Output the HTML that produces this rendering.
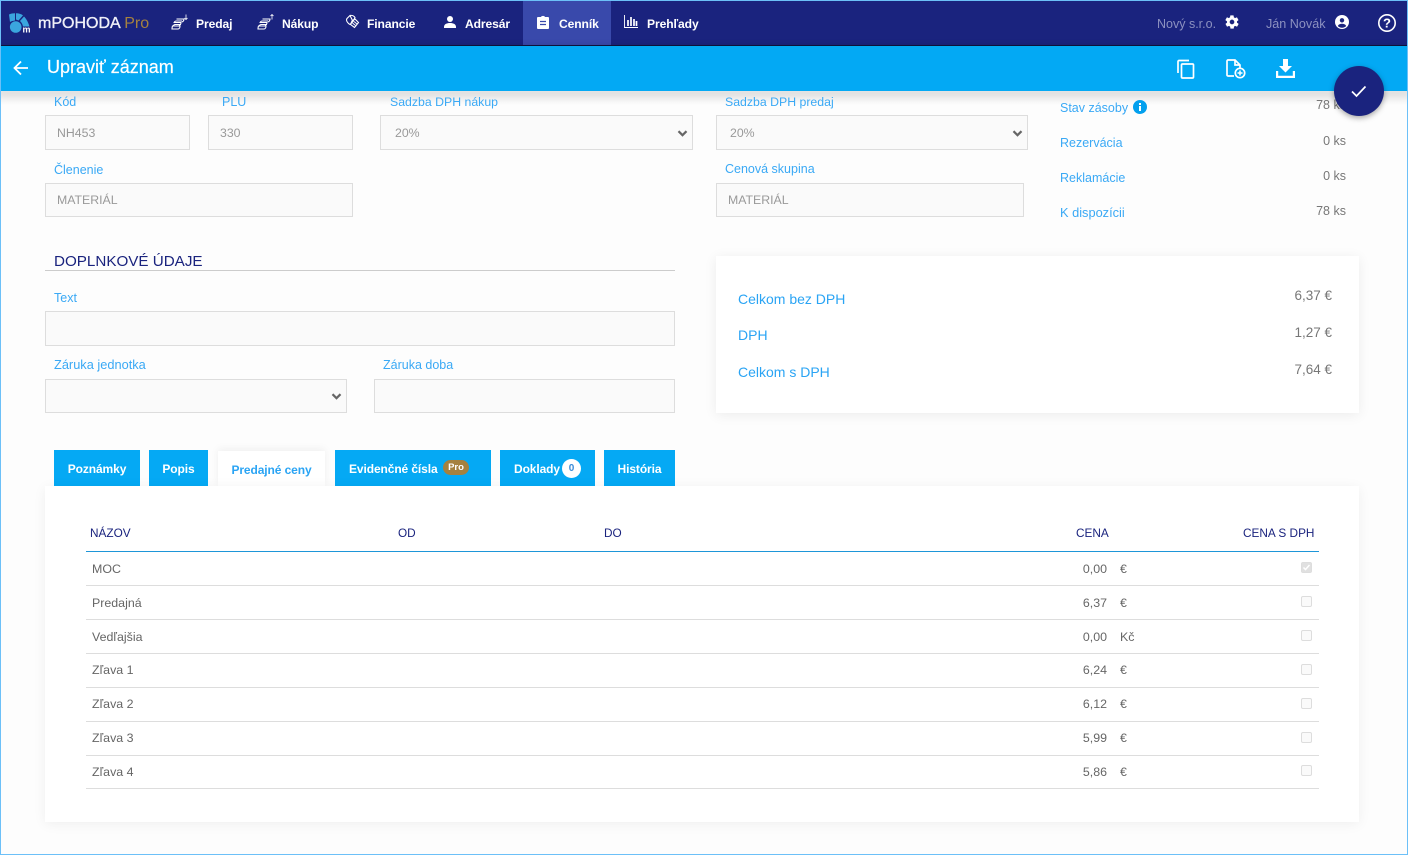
<!DOCTYPE html>
<html lang="sk"><head><meta charset="utf-8"><title>mPOHODA</title>
<style>
*{box-sizing:border-box}
html,body{margin:0;padding:0}
body{width:1408px;height:855px;position:relative;overflow:hidden;background:#fdfdfd;font-family:"Liberation Sans",sans-serif;font-size:13px;color:#666}
.a,.t,.l,.i,.r{position:absolute}
.t,.l,.r{line-height:16px;white-space:nowrap}
.l{color:#3aa9f5;font-size:12.5px}
.r{text-align:right;color:#777;font-size:12.5px}
.i{background:#fafafa;border:1px solid #ddd;color:#999;font-size:12.3px;line-height:34px;padding-left:11px}
.sel svg{position:absolute;right:4px;top:14px}
.n{color:#fff;font-weight:bold;font-size:12.1px;letter-spacing:-.1px}
.tab{position:absolute;top:450px;height:36px;background:#05a9f4;color:#fff;font-weight:bold;font-size:12px;line-height:38px;text-align:center;white-space:nowrap;letter-spacing:-.1px}
.h{color:#1a237e;font-size:11.8px;top:525px}
.line{position:absolute;left:86px;width:1233px;height:1px;background:#ddd}
.c{position:absolute;left:1301px;width:11px;height:11px;border:1px solid #ddd;border-radius:2px;background:#fafafa}
.s{color:#666;font-size:12.4px}
</style></head><body>
<div class="a" style="left:0;top:0;width:1408px;height:46px;background:#1a237e;border-bottom:1px solid #10143f"></div>
<div class="a" style="left:523px;top:1px;width:88px;height:44px;background:#3949ab"></div>
<div class="a" style="left:0;top:46px;width:1408px;height:45px;background:#03a9f4;box-shadow:0 2px 8px rgba(0,0,0,.3)"></div>

<svg class="a" style="left:8px;top:12px" width="24" height="22" viewBox="0 0 24 22"><path d="M1 2.500c2-1 4-1.300 6-1.300V8.500C5.500 8.800 3.500 9 2 10z" fill="#3aa6de"/><path d="M8 1.200c3 0 5.500.8 7 2.200L10.500 8.500 8 7.500z" fill="#3aa6de"/><path d="M16 4.500c2 2 4 5 5.500 10h-6.500c-.3-2-1-3.500-3-5.500z" fill="#3aa6de"/><circle cx="7.700" cy="15" r="5.800" fill="#3aa6de"/><rect x="14" y="14.500" width="8" height="6" fill="#1a237e"/><text x="14.500" y="20.300" font-size="9" font-weight="bold" fill="#fff" font-family="Liberation Sans">m</text></svg>
<div class="t" style="left:38px;top:16px;color:#f0f0f8;font-size:16px;-webkit-text-stroke:.35px #f0f0f8">mPOHODA <span style="color:#a5813f;-webkit-text-stroke:0">Pro</span></div>

<svg class="a" style="left:171px;top:14px" width="18" height="18" viewBox="0 0 18 18" fill="none" stroke="#fff" stroke-width="1.100"><path d="M5.500 5h7.500c0 1.500-.8 2.500-2 3M3 9c.3-1.300 1-2 2.500-2H11M2.500 8.500h7.500c0 1.500-.8 2.500-2 3M2 12.500c.3-1.300 1-2 2.500-2H10M1.500 12h7.500c0 1.500-.8 3-2 3H1c0-1.500.3-2.500 .5-3z"/><path d="M15 .5v5M13.500 4L15 5.500 16.500 4" stroke-width=".8"/></svg>
<div class="t n" style="left:196px;top:16px">Predaj</div>
<svg class="a" style="left:257px;top:14px" width="18" height="18" viewBox="0 0 18 18" fill="none" stroke="#fff" stroke-width="1.100"><path d="M5.500 5h7.500c0 1.500-.8 2.500-2 3M3 9c.3-1.300 1-2 2.500-2H11M2.500 8.500h7.500c0 1.500-.8 2.500-2 3M2 12.500c.3-1.300 1-2 2.500-2H10M1.500 12h7.500c0 1.500-.8 3-2 3H1c0-1.500.3-2.500 .5-3z"/><path d="M15 5.500v-5M13.500 2L15 .5 16.500 2" stroke-width=".8"/></svg>
<div class="t n" style="left:282px;top:16px">Nákup</div>
<svg class="a" style="left:345px;top:14px" width="15" height="16" viewBox="0 0 15 16" fill="none" stroke="#fff" stroke-width="1.100"><path d="M5 1.500l-3 3c-1.500 2 1 5 3 6l3-3z"/><path d="M5 1.500c2-.5 4 .5 5 2l-2 4"/><path d="M7 7l3-2 3.500 3.500-4 5-4-3z"/><path d="M7.500 9l3 2.500M9 7.500l3 2.500" stroke-width=".9"/></svg>
<div class="t n" style="left:367px;top:16px">Financie</div>
<svg class="a" style="left:443px;top:15px" width="14" height="14" viewBox="0 0 14 14" fill="#fff"><circle cx="7" cy="4" r="3"/><path d="M1 12c0-3 3-4 6-4s6 1 6 4v1H1z"/></svg>
<div class="t n" style="left:465px;top:16px">Adresár</div>
<svg class="a" style="left:536px;top:15px" width="14" height="15" viewBox="0 0 14 15"><path d="M2 2h3c.5-1.500 3.500-1.500 4 0h3a1 1 0 0 1 1 1v10a1 1 0 0 1-1 1H2a1 1 0 0 1-1-1V3a1 1 0 0 1 1-1z" fill="#fff"/><path d="M4 6.500h6M4 9.500h6" stroke="#3949ab" stroke-width="1.300"/></svg>
<div class="t n" style="left:559px;top:16px">Cenník</div>
<svg class="a" style="left:624px;top:14px" width="15" height="15" viewBox="0 0 15 15" fill="none" stroke="#fff"><path d="M.5 1v12.500H14" stroke-width=".9"/><path d="M4 12V6M7 12V3M10 12V5M12.500 12V7" stroke-width="1.700"/></svg>
<div class="t n" style="left:647px;top:16px">Prehľady</div>

<div class="t" style="left:1157px;top:16px;color:#8c91c0;font-size:12.5px">Nový s.r.o.</div>
<svg class="a" style="left:1224px;top:14px" width="16" height="16" viewBox="0 0 24 24" fill="#fff"><path d="M19.400 13c.1-.3.100-.7.100-1s0-.7-.1-1l2.100-1.600c.2-.2.200-.4.100-.6l-2-3.500c-.1-.2-.4-.3-.6-.2l-2.500 1c-.5-.4-1.100-.7-1.700-1l-.4-2.600c0-.3-.2-.5-.5-.5h-4c-.3 0-.5.200-.5.500l-.4 2.600c-.6.300-1.200.6-1.700 1l-2.500-1c-.2-.1-.5 0-.6.200l-2 3.500c-.1.200-.1.400.1.600L4.600 11c-.1.300-.1.700-.1 1s0 .7.100 1l-2.100 1.600c-.2.200-.2.400-.1.600l2 3.500c.1.200.4.300.6.200l2.500-1c.5.400 1.100.7 1.700 1l.4 2.600c0 .3.200.5.500.5h4c.3 0 .5-.2.500-.5l.4-2.600c.6-.3 1.200-.6 1.700-1l2.500 1c.2.100.5 0 .6-.2l2-3.500c.1-.2.100-.4-.1-.6zM12 15.500a3.500 3.500 0 1 1 0-7 3.500 3.500 0 0 1 0 7z"/></svg>
<div class="t" style="left:1266px;top:16px;color:#8c91c0;font-size:12.6px">Ján Novák</div>
<svg class="a" style="left:1335px;top:15px" width="14" height="14" viewBox="0 0 14 14"><circle cx="7" cy="7" r="7" fill="#fff"/><circle cx="7" cy="5.300" r="2.200" fill="#1a237e"/><path d="M2.800 11c.8-1.600 2.500-2.200 4.200-2.200s3.400.6 4.200 2.200c-1 1.100-2.500 1.800-4.200 1.800s-3.200-.7-4.200-1.800z" fill="#1a237e"/></svg>
<svg class="a" style="left:1377px;top:13px" width="20" height="20" viewBox="0 0 20 20" fill="none"><circle cx="10" cy="10" r="8.200" stroke="#fff" stroke-width="1.600"/><text x="10" y="14.500" text-anchor="middle" font-size="13" font-weight="bold" fill="#fff" font-family="Liberation Sans">?</text></svg>

<svg class="a" style="left:12px;top:59px" width="18" height="18" viewBox="0 0 18 18" fill="none" stroke="#fff" stroke-width="1.800"><path d="M16 9H2.500M9 2.500L2.500 9 9 15.500"/></svg>
<div class="t" style="left:47px;top:58px;color:#fff;font-size:18px;line-height:18px;-webkit-text-stroke:.2px #fff">Upraviť záznam</div>
<svg class="a" style="left:1176px;top:59px" width="20" height="20" viewBox="0 0 20 20" fill="none" stroke="#fff" stroke-width="1.700"><path d="M2 14V2.500a1 1 0 0 1 1-1h10"/><rect x="5.500" y="5" width="12" height="14" rx="1"/></svg>
<svg class="a" style="left:1225px;top:58px" width="21" height="21" viewBox="0 0 21 21" fill="none" stroke="#fff" stroke-width="1.700"><path d="M9 18H3a1 1 0 0 1-1-1V3a1 1 0 0 1 1-1h7l5 5v3"/><path d="M10 2v5h5"/><circle cx="15" cy="15" r="4.700"/><path d="M12.500 15h5M15 12.500v5" stroke-width="1.500"/></svg>
<svg class="a" style="left:1275px;top:58px" width="21" height="21" viewBox="0 0 21 21" fill="#fff"><path d="M8 1h5v7h4l-6.500 6.500L4 8h4z"/><path d="M1 13h2.200v4.800h14.600V13H20v7H1z"/></svg>

<div class="a" style="left:0;top:91px;width:1408px;height:14px;background:linear-gradient(#e4e4e4,rgba(255,255,255,0))"></div>

<div class="t l" style="left:54px;top:94px">Kód</div>
<div class="t l" style="left:222px;top:94px">PLU</div>
<div class="t l" style="left:390px;top:94px;font-size:12.3px">Sadzba DPH nákup</div>
<div class="t l" style="left:725px;top:94px;font-size:12.3px">Sadzba DPH predaj</div>
<div class="i" style="left:45px;top:115px;width:145px;height:35px">NH453</div>
<div class="i" style="left:208px;top:115px;width:145px;height:35px">330</div>
<div class="i sel" style="left:380px;top:115px;width:313px;height:35px;padding-left:14px">20%<svg width="11" height="7" viewBox="0 0 11 7" fill="none" stroke="#666" stroke-width="2.200"><path d="M1.500 1.200l4 4 4-4"/></svg></div>
<div class="i sel" style="left:716px;top:115px;width:312px;height:35px;padding-left:13px">20%<svg width="11" height="7" viewBox="0 0 11 7" fill="none" stroke="#666" stroke-width="2.200"><path d="M1.500 1.200l4 4 4-4"/></svg></div>
<div class="t l" style="left:54px;top:162px">Členenie</div>
<div class="t l" style="left:725px;top:161px">Cenová skupina</div>
<div class="i" style="left:45px;top:183px;width:308px;height:34px;line-height:32px">MATERIÁL</div>
<div class="i" style="left:716px;top:183px;width:308px;height:34px;line-height:32px">MATERIÁL</div>

<div class="t l" style="left:1060px;top:100px">Stav zásoby</div>
<svg class="a" style="left:1133px;top:100px" width="14" height="14" viewBox="0 0 14 14"><circle cx="7" cy="7" r="7" fill="#03a0ee"/><rect x="6" y="6" width="2" height="5" fill="#fff"/><rect x="6" y="3" width="2" height="2" fill="#fff"/></svg>
<div class="t l" style="left:1060px;top:135px">Rezervácia</div>
<div class="t l" style="left:1060px;top:170px">Reklamácie</div>
<div class="t l" style="left:1060px;top:205px;font-size:12.8px">K dispozícii</div>
<div class="t r" style="left:1280px;width:66px;top:97px">78 ks</div>
<div class="t r" style="left:1280px;width:66px;top:133px">0 ks</div>
<div class="t r" style="left:1280px;width:66px;top:168px">0 ks</div>
<div class="t r" style="left:1280px;width:66px;top:203px">78 ks</div>

<div class="a" style="left:1334px;top:66px;width:50px;height:50px;border-radius:50%;background:#1a237e;box-shadow:0 2px 6px rgba(0,0,0,.35)"></div>
<svg class="a" style="left:1350px;top:84px" width="18" height="14" viewBox="0 0 18 14" fill="none" stroke="#fff" stroke-width="1.700"><path d="M2 7.500l4.500 4.500L15.500 2.500"/></svg>

<div class="t" style="left:54px;top:253px;color:#1a237e;font-size:15.200px;line-height:18px">DOPLNKOVÉ ÚDAJE</div>
<div class="a" style="left:45px;top:270px;width:630px;height:1px;background:#ccc"></div>
<div class="t l" style="left:54px;top:290px">Text</div>
<div class="i" style="left:45px;top:311px;width:630px;height:35px"></div>
<div class="t l" style="left:54px;top:357px;font-size:12.800px">Záruka jednotka</div>
<div class="t l" style="left:383px;top:357px">Záruka doba</div>
<div class="i sel" style="left:45px;top:379px;width:302px;height:34px"><svg style="top:13px" width="11" height="7" viewBox="0 0 11 7" fill="none" stroke="#666" stroke-width="2.200"><path d="M1.500 1.200l4 4 4-4"/></svg></div>
<div class="i" style="left:374px;top:379px;width:301px;height:34px"></div>

<div class="a" style="left:716px;top:256px;width:643px;height:157px;background:#fff;box-shadow:0 2px 12px rgba(0,0,0,.07)"></div>
<div class="t" style="left:738px;top:291px;color:#2aa4f4;font-size:14px">Celkom bez DPH</div>
<div class="t" style="left:738px;top:327px;color:#2aa4f4;font-size:14px">DPH</div>
<div class="t" style="left:738px;top:364px;color:#2aa4f4;font-size:14px">Celkom s DPH</div>
<div class="t r" style="left:1250px;width:82px;top:288px;font-size:13.500px">6,37 €</div>
<div class="t r" style="left:1250px;width:82px;top:325px;font-size:13.500px">1,27 €</div>
<div class="t r" style="left:1250px;width:82px;top:362px;font-size:13.500px">7,64 €</div>

<div class="tab" style="left:54px;width:86px">Poznámky</div>
<div class="tab" style="left:149px;width:59px">Popis</div>
<div class="tab" style="left:218px;width:107px;top:451px;height:36px;background:#fff;color:#2aa4f4;box-shadow:0 -2px 8px rgba(0,0,0,.06)">Predajné ceny</div>
<div class="tab" style="left:335px;width:156px;text-align:left;padding-left:14px">Evidenčné čísla<span style="position:absolute;left:108px;top:10px;width:26px;height:15px;border-radius:8px;background:#a5813f;font-size:9.500px;line-height:15px;text-align:center;letter-spacing:0">Pro</span></div>
<div class="tab" style="left:500px;width:95px;text-align:left;padding-left:14px">Doklady<span style="position:absolute;left:62px;top:9px;width:19px;height:19px;border-radius:50%;background:#fff;color:#3a8bd8;font-size:10px;line-height:20px;text-align:center">0</span></div>
<div class="tab" style="left:604px;width:71px">História</div>

<div class="a" style="left:45px;top:486px;width:1314px;height:336px;background:#fff;box-shadow:0 2px 12px rgba(0,0,0,.06)"></div>
<div class="t h" style="left:90px">NÁZOV</div>
<div class="t h" style="left:398px">OD</div>
<div class="t h" style="left:604px">DO</div>
<div class="t h" style="left:1076px">CENA</div>
<div class="t h" style="left:1243px">CENA S DPH</div>
<div class="line" style="top:551px;background:#1e96d8"></div>
<div class="line" style="top:585px"></div>
<div class="line" style="top:619px"></div>
<div class="line" style="top:653px"></div>
<div class="line" style="top:687px"></div>
<div class="line" style="top:721px"></div>
<div class="line" style="top:755px"></div>
<div class="line" style="top:788px"></div>

<div class="t s" style="left:92px;top:561px">MOC</div>
<div class="t s" style="left:92px;top:595px">Predajná</div>
<div class="t s" style="left:92px;top:629px">Vedľajšia</div>
<div class="t s" style="left:92px;top:662px">Zľava 1</div>
<div class="t s" style="left:92px;top:696px">Zľava 2</div>
<div class="t s" style="left:92px;top:730px">Zľava 3</div>
<div class="t s" style="left:92px;top:764px">Zľava 4</div>

<div class="t r s" style="left:1060px;width:47px;top:561px">0,00</div><div class="t s" style="left:1120px;top:561px">€</div>
<div class="t r s" style="left:1060px;width:47px;top:595px">6,37</div><div class="t s" style="left:1120px;top:595px">€</div>
<div class="t r s" style="left:1060px;width:47px;top:629px">0,00</div><div class="t s" style="left:1120px;top:629px">Kč</div>
<div class="t r s" style="left:1060px;width:47px;top:662px">6,24</div><div class="t s" style="left:1120px;top:662px">€</div>
<div class="t r s" style="left:1060px;width:47px;top:696px">6,12</div><div class="t s" style="left:1120px;top:696px">€</div>
<div class="t r s" style="left:1060px;width:47px;top:730px">5,99</div><div class="t s" style="left:1120px;top:730px">€</div>
<div class="t r s" style="left:1060px;width:47px;top:764px">5,86</div><div class="t s" style="left:1120px;top:764px">€</div>

<div class="c" style="top:562px;background:#e0e0e0"><svg style="position:absolute;left:0;top:0" width="9" height="9" viewBox="0 0 9 9" fill="none" stroke="#fff" stroke-width="1.500"><path d="M1.500 4.500l2 2 4-4.500"/></svg></div>
<div class="c" style="top:596px"></div>
<div class="c" style="top:630px"></div>
<div class="c" style="top:664px"></div>
<div class="c" style="top:698px"></div>
<div class="c" style="top:732px"></div>
<div class="c" style="top:765px"></div>

<div class="a" style="left:0;top:0;width:1408px;height:855px;border:1px solid #6cc0f8;pointer-events:none"></div>
</body></html>
